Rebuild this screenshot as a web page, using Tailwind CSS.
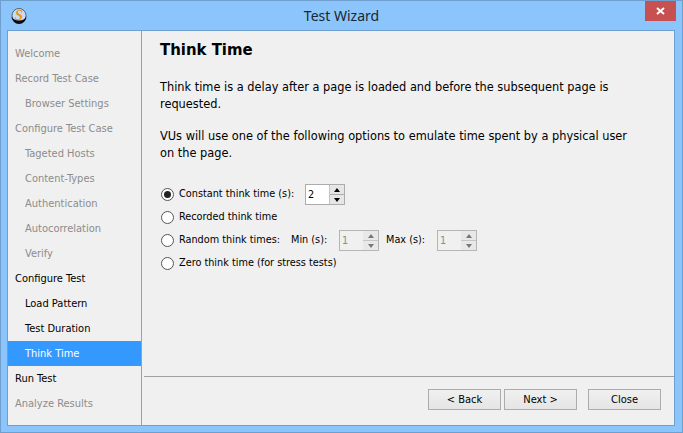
<!DOCTYPE html>
<html lang="en">

<head>
    <meta charset="UTF-8" />
    <title>Test Wizard</title>
    <script src="https://cdn.jsdelivr.net/npm/@tailwindcss/browser@4"></script>
</head>

<body class="w-[683px] h-[433px] overflow-hidden font-['DejaVu_Sans',sans-serif] font-stretch-condensed text-[12px] text-black">
    <div class="w-full h-full flex flex-col bg-[#8bc5fb] border border-[#6f9fcf]">
        <!-- title bar -->
        <div class="h-[29px] flex items-start relative shrink-0">
            <svg class="absolute left-[9px] top-[6px]" width="18" height="18" viewBox="0 0 18 18">
                <circle cx="9" cy="8.500" r="7" fill="#c3def5" stroke="#3a4650" stroke-width="0.8" />
                <path d="M1.500 9.500a7.500 7.500 0 0 0 15 0a8 6 0 0 1-15 0z" fill="#0c0c0c" />
                <text x="9" y="13" text-anchor="middle" font-family="Liberation Serif, serif" font-style="italic" font-weight="700" font-size="15" fill="#f2961e">S</text>
            </svg>
            <div class="flex-1 pl-[37px] text-center font-['Noto_Sans',sans-serif] font-stretch-normal text-[14px] leading-[30px] text-[#1a2733]">Test Wizard</div>
            <div class="w-[31px] h-[20px] mr-[6px] bg-[#c75050] flex items-center justify-center">
                <svg width="9" height="8" viewBox="0 0 9 8"><path d="M1 1l7 6M8 1L1 7" stroke="#fff" stroke-width="2" /></svg>
            </div>
        </div>
        <!-- body -->
        <div class="w-[668px] h-[396px] ml-[6px] flex bg-[#f0f0f0] border border-[#6f9fcf]">
            <div class="w-[134px] shrink-0 pt-[10px] border-r border-[#a0a0a0] text-[#8c8c8c] leading-[25px] text-[11px]">
                <div class="h-[25px] pl-[7px]">Welcome</div>
                <div class="h-[25px] pl-[7px]">Record Test Case</div>
                <div class="h-[25px] pl-[17px]">Browser Settings</div>
                <div class="h-[25px] pl-[7px]">Configure Test Case</div>
                <div class="h-[25px] pl-[17px]">Tageted Hosts</div>
                <div class="h-[25px] pl-[17px]">Content-Types</div>
                <div class="h-[25px] pl-[17px]">Authentication</div>
                <div class="h-[25px] pl-[17px]">Autocorrelation</div>
                <div class="h-[25px] pl-[17px]">Verify</div>
                <div class="h-[25px] pl-[7px] text-black">Configure Test</div>
                <div class="h-[25px] pl-[17px] text-black">Load Pattern</div>
                <div class="h-[25px] pl-[17px] text-black">Test Duration</div>
                <div class="h-[25px] pl-[17px] bg-[#3399ff] text-white">Think Time</div>
                <div class="h-[25px] pl-[7px] text-black">Run Test</div>
                <div class="h-[25px] pl-[7px]">Analyze Results</div>
            </div>
            <div class="flex-1 flex flex-col">
                <div class="h-[346px] pl-[16px] pr-[40px] pt-[7px] border-b border-[#a0a0a0] ml-[2px]">
                    <h1 class="font-bold text-[16.6px] leading-[24px]">Think Time</h1>
                    <p class="mt-[16px] leading-[17px] text-[12.65px]">Think time is a delay after a page is loaded and before the subsequent page is requested.</p>
                    <p class="mt-[15px] leading-[17px] text-[12.65px]">VUs will use one of the following options to emulate time spent by a physical user on the page.</p>
                    <div class="mt-[22px] pl-[1px] flex flex-col text-[10.8px]">
                        <div class="h-[23px] flex items-center">
                            <span class="w-[13px] h-[13px] rounded-full border border-[#555] bg-white flex items-center justify-center"><span class="w-[7px] h-[7px] rounded-full bg-[#222]"></span></span>
                            <span class="ml-[5px] w-[126px]">Constant think time (s):</span>
                            <div class="w-[40px] h-[21px] border border-[#acacac] bg-white flex">
                                <span class="flex-1 pl-[2px] leading-[19px]">2</span>
                                <div class="w-[15px] flex flex-col bg-[#e6e6e6] border-l border-[#c4c4c4]">
                                    <div class="flex-1 flex items-center justify-center border-b border-[#acacac]"><span class="border-x-[3px] border-x-transparent border-b-[4px] border-b-black"></span></div>
                                    <div class="flex-1 flex items-center justify-center"><span class="border-x-[3px] border-x-transparent border-t-[4px] border-t-black"></span></div>
                                </div>
                            </div>
                        </div>
                        <div class="h-[23px] flex items-center">
                            <span class="w-[13px] h-[13px] rounded-full border border-[#555] bg-white"></span>
                            <span class="ml-[5px]">Recorded think time</span>
                        </div>
                        <div class="h-[23px] flex items-center">
                            <span class="w-[13px] h-[13px] rounded-full border border-[#555] bg-white"></span>
                            <span class="ml-[5px] w-[112px]">Random think times:</span>
                            <span class="w-[48px]">Min (s):</span>
                            <div class="w-[40px] h-[21px] border border-[#b5b5b5] flex text-[#8c8c8c]">
                                <span class="flex-1 pl-[2px] leading-[19px]">1</span>
                                <div class="w-[15px] flex flex-col bg-[#e8e8e8]">
                                    <div class="flex-1 flex items-center justify-center border-b border-[#c5c5c5]"><span class="border-x-[3px] border-x-transparent border-b-[4px] border-b-[#777]"></span></div>
                                    <div class="flex-1 flex items-center justify-center"><span class="border-x-[3px] border-x-transparent border-t-[4px] border-t-[#777]"></span></div>
                                </div>
                            </div>
                            <span class="ml-[7px] w-[51px]">Max (s):</span>
                            <div class="w-[40px] h-[21px] border border-[#b5b5b5] flex text-[#8c8c8c]">
                                <span class="flex-1 pl-[2px] leading-[19px]">1</span>
                                <div class="w-[15px] flex flex-col bg-[#e8e8e8]">
                                    <div class="flex-1 flex items-center justify-center border-b border-[#c5c5c5]"><span class="border-x-[3px] border-x-transparent border-b-[4px] border-b-[#777]"></span></div>
                                    <div class="flex-1 flex items-center justify-center"><span class="border-x-[3px] border-x-transparent border-t-[4px] border-t-[#777]"></span></div>
                                </div>
                            </div>
                        </div>
                        <div class="h-[23px] flex items-center">
                            <span class="w-[13px] h-[13px] rounded-full border border-[#555] bg-white"></span>
                            <span class="ml-[5px]">Zero think time (for stress tests)</span>
                        </div>
                    </div>
                </div>
                <div class="flex-1 flex justify-end items-start pt-[12px] pr-[13px] gap-[3px] text-[11px]">
                    <button class="w-[73px] h-[21px] border border-[#acacac] bg-gradient-to-b from-[#f0f0f0] to-[#e5e5e5] leading-[18px]">&lt; Back</button>
                    <button class="w-[73px] h-[21px] border border-[#acacac] bg-gradient-to-b from-[#f0f0f0] to-[#e5e5e5] leading-[18px]">Next &gt;</button>
                    <button class="w-[73px] h-[21px] ml-[8px] border border-[#acacac] bg-gradient-to-b from-[#f0f0f0] to-[#e5e5e5] leading-[18px]">Close</button>
                </div>
            </div>
        </div>
    </div>
</body>

</html>
